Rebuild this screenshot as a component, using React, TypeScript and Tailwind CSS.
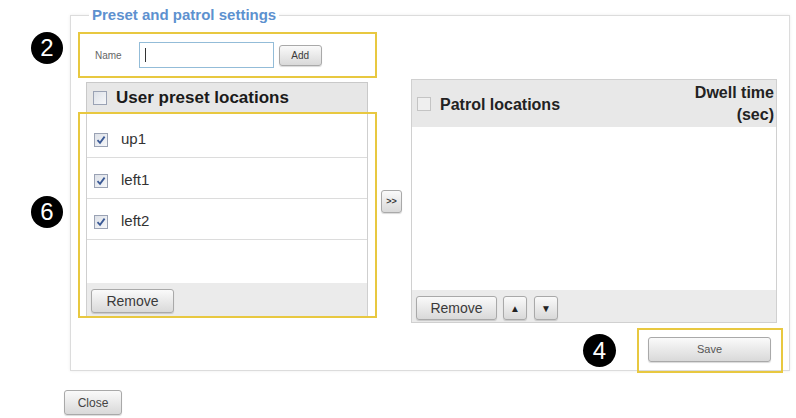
function Badge({ n, className = "" }: { n: string; className?: string }) {
  return (
    <div
      className={`flex h-[32px] w-[32px] items-center justify-center rounded-full bg-black text-[24px] leading-none text-white ${className}`}
    >
      {n}
    </div>
  );
}

function Box({ checked = false }: { checked?: boolean }) {
  return (
    <span className="flex h-[14px] w-[14px] shrink-0 items-center justify-center border border-[#9aa2b4] bg-gradient-to-br from-[#dde1e8] to-[#f6f7f9]">
      {checked && (
        <svg width="10" height="10" viewBox="0 0 10 10">
          <path d="M1.5 5.2 L4 7.8 L8.6 1.6" fill="none" stroke="#3b5a96" strokeWidth="1.8" />
        </svg>
      )}
    </span>
  );
}

function Btn({ children, className = "" }: { children: React.ReactNode; className?: string }) {
  return (
    <div
      className={`flex items-center justify-center rounded-[3px] border border-[#a9a9a9] bg-gradient-to-b from-[#fafafa] to-[#d9d9d9] text-[#3a3a3a] shadow-[0_1px_1px_rgba(0,0,0,0.15)] ${className}`}
    >
      {children}
    </div>
  );
}

const presets = ["up1", "left1", "left2"];

export default function App() {
  return (
    <div className="relative h-[418px] w-[796px] overflow-hidden bg-white pt-[15px] font-['Liberation_Sans',Arial,sans-serif]">
      <Badge n="2" className="absolute left-[31px] top-[32px]" />
      <Badge n="6" className="absolute left-[31px] top-[196px]" />

      <div className="relative ml-[70px] h-[356px] w-[720px] border border-[#dcdcdc] pl-[7px] pt-[16px] shadow-[0_0_3px_rgba(0,0,0,0.08)]">
        <div className="absolute left-[18px] top-[-10px] bg-white px-[3px] text-[15px] font-bold leading-[18px] text-[#5d91cf]">
          Preset and patrol settings
        </div>

        <div className="flex items-start">
          <div className="flex w-[299px] flex-col">
            <div className="flex h-[46px] items-center border-2 border-[#e8c840] pl-[15px]">
              <span className="text-[10px] text-[#666]">Name</span>
              <div className="ml-[17px] flex h-[26px] w-[135px] items-center border border-[#93bcd8] bg-white pl-[5px]">
                <span className="h-[14px] w-px bg-[#333]" />
              </div>
              <Btn className="ml-[5px] h-[21px] w-[43px] text-[10px]">Add</Btn>
            </div>

            <div className="ml-[8px] mt-[4px] flex h-[30px] w-[282px] items-center gap-[9px] border border-b-0 border-[#c9c9c9] bg-[#e7e7e7] pl-[6px]">
              <Box />
              <span className="text-[17px] font-bold text-[#1a1a1a]">User preset locations</span>
            </div>

            <div className="flex h-[206px] flex-col border-2 border-[#e8c840] pl-[6px] pr-[5px]">
              <div className="flex h-[169px] w-[282px] flex-col border-x border-[#cfcfcf] bg-white pt-[3px]">
                {presets.map((p) => (
                  <div key={p} className="flex h-[41px] items-center gap-[13px] border-b border-[#dcdcdc] pl-[7px] pt-[5px]">
                    <Box checked />
                    <span className="text-[15px] text-[#333]">{p}</span>
                  </div>
                ))}
              </div>
              <div className="flex h-[33px] w-[282px] items-start border-x border-[#cfcfcf] bg-[#ebebeb] pl-[4px] pt-[6px]">
                <Btn className="h-[24px] w-[83px] text-[14px]">Remove</Btn>
              </div>
            </div>
          </div>

          <Btn className="ml-[4px] mt-[158px] h-[23px] w-[21px] text-[9px] font-bold">&gt;&gt;</Btn>

          <div className="ml-[9px] mt-[47px] flex w-[366px] flex-col">
            <div className="flex h-[48px] items-center border border-b-0 border-[#d0d0d0] bg-[#e8e8e8] pl-[5px] pr-[2px]">
              <span className="h-[14px] w-[14px] border border-[#c4c4c4] bg-[#efefef]" />
              <span className="ml-[9px] mt-[2px] text-[16px] font-bold text-[#222]">Patrol locations</span>
              <span className="ml-auto text-right text-[16px] font-bold leading-[22px] text-[#222]">
                Dwell time
                <br />
                (sec)
              </span>
            </div>
            <div className="h-[163px] border-x border-[#d0d0d0] bg-white" />
            <div className="flex h-[33px] items-start border border-t-0 border-[#d0d0d0] bg-[#ebebeb] pl-[4px] pt-[6px]">
              <Btn className="h-[24px] w-[81px] text-[14px]">Remove</Btn>
              <Btn className="ml-[6px] h-[24px] w-[24px] text-[10px] text-[#222]">▲</Btn>
              <Btn className="ml-[7px] h-[24px] w-[24px] text-[10px] text-[#222]">▼</Btn>
            </div>
          </div>
        </div>

        <div className="mt-[5px] flex items-center justify-end pr-[6px]">
          <Badge n="4" className="mr-[21px] h-[33px] w-[33px]" />
          <div className="flex h-[45px] w-[146px] items-start border-2 border-[#e8c840] pl-[9px] pt-[7px]">
            <Btn className="h-[25px] w-[123px] text-[11px] text-[#555]">Save</Btn>
          </div>
        </div>
      </div>

      <Btn className="ml-[64px] mt-[19px] h-[25px] w-[58px] text-[12px] text-[#444]">Close</Btn>
    </div>
  );
}
